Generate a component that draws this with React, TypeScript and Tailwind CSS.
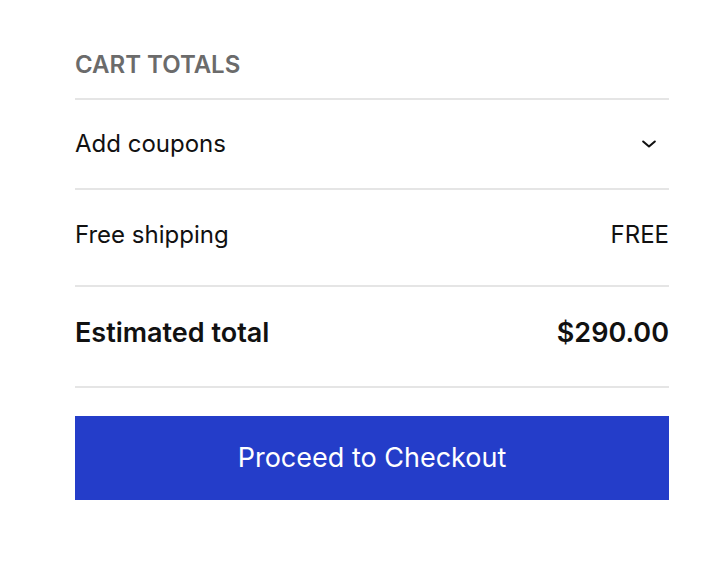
export default function App() {
  return (
    <div className="min-h-screen bg-white font-['Inter',sans-serif] text-[#111]">
      <div className="ml-[75px] w-[594px] pt-[50px]">
        <h2 className="pb-[18px] text-[24px] font-semibold leading-[30px] text-[#6b6b6b]">CART TOTALS</h2>

        <div className="flex h-[90px] items-center justify-between border-t-2 border-[#e5e5e5] pr-[10px]">
          <span className="text-[24px]">Add coupons</span>
          <svg width="20" height="20" viewBox="0 0 24 24" fill="none" stroke="#111" strokeWidth="2.5" strokeLinecap="round" strokeLinejoin="round">
            <path d="M5 9l7 6 7-6" />
          </svg>
        </div>

        <div className="flex h-[97px] items-center justify-between border-t-2 border-[#e5e5e5] pb-[6px]">
          <span className="text-[24px]">Free shipping</span>
          <span className="text-[24px]">FREE</span>
        </div>

        <div className="flex h-[103px] items-center justify-between border-t-2 border-[#e5e5e5] border-b-2 pb-[6px]">
          <span className="text-[27px] font-semibold">Estimated total</span>
          <span className="text-[27px] font-semibold">$290.00</span>
        </div>

        <button className="mt-[28px] flex h-[84px] w-full items-center justify-center bg-[#243dc9] text-[27px] text-white">
          Proceed to Checkout
        </button>
      </div>
    </div>
  );
}
